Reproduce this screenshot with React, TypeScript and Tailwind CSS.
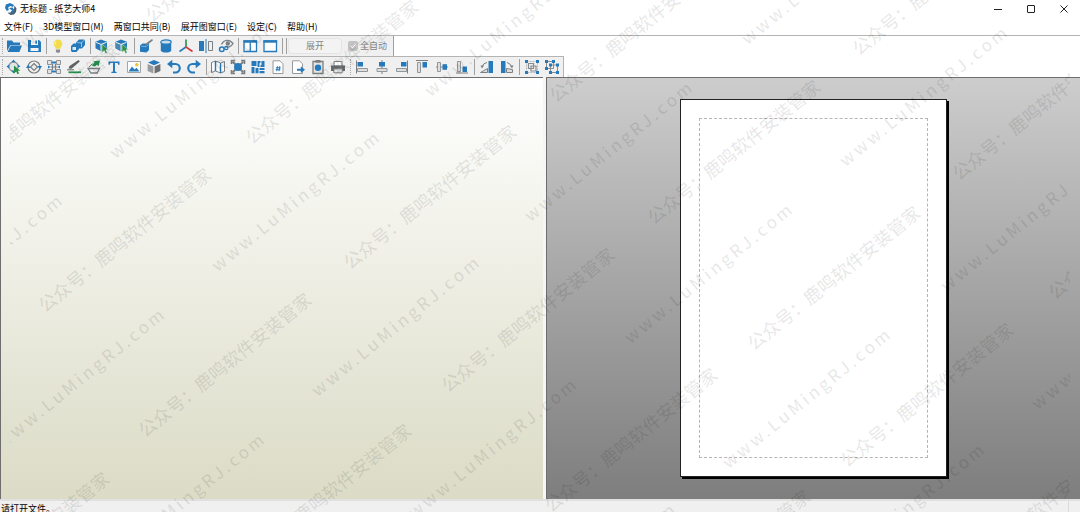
import React from 'react';

const BLUE = '#267abb';
const GRAY = '#7b7f82';
const GREEN = '#25914a';

const menus = ['文件(F)', '3D模型窗口(M)', '两窗口共同(B)', '展开图窗口(E)', '设定(C)', '帮助(H)'];

// Baseline start of every repeated mark, on the window's canvas
const accountMarks = [
  [-46, 183], [46, 307], [146, 432], [-56, 611], [153, 17], [253, 139], [351, 264], [449, 387],
  [552, 507], [246, 563], [557, 97], [655, 219], [755, 345], [848, 462], [645, 629], [860, 50],
  [960, 175], [1056, 294], [951, 584],
];
const siteMarks = [
  [28, 44], [117, 154], [219, 267], [319, 392], [4, 444], [-98, 330], [104, 569], [432, 92],
  [532, 217], [632, 339], [730, 464], [749, 40], [847, 162], [948, 287], [1039, 405], [824, 579],
  [416, 514], [515, 639],
];

const icons: Record<string, React.ReactNode> = {
  open: (
    <>
      <path d="M1 13V2.5h5l1.5 2H14V7H4.5z" fill={BLUE} />
      <path d="M4.8 7.6H16L13.4 14H1.6z" fill={BLUE} />
    </>
  ),
  save: (
    <>
      <path d="M2 2h11l2 2v10H2z" fill={BLUE} />
      <path d="M5 2h7v5H5z" fill="#f4f4f4" />
      <path d="M9.3 2.6h1.7v3.2H9.3z" fill={BLUE} />
      <path d="M4.5 10h8v3h-8z" fill="#f4f4f4" />
    </>
  ),
  bulb: (
    <>
      <path d="M8 1.5a4.3 4.3 0 0 0-4.3 4.3c0 2 1.6 2.9 2 4.9h4.6c.4-2 2-2.9 2-4.9A4.3 4.3 0 0 0 8 1.5z" fill="#f2dc4e" />
      <path d="M6 3.8a3 3 0 0 0-.8 2.6" stroke="#fff6b5" fill="none" />
      <path d="M5.9 11.4h4.2v2.4l-1 1H6.9l-1-1z" fill="#8d8d8d" />
    </>
  ),
  cubes: (
    <>
      <path d="m6 4.5 3-3h5l1 1V7l-3 3.5H6z" fill={BLUE} />
      <path d="M7 4.8h4.5V9M11.500 4.800l2.500-2.500" stroke="#cfe2f1" strokeWidth=".7" fill="none" />
      <path d="m1 8 2.500-2.500H9V11l-2.500 3H2l-1-1z" fill={BLUE} />
      <path d="M2.500 9h3.500v3H2.500z" fill="#dbe8f2" />
    </>
  ),
  cubePick: (
    <>
      <path d="m7 1.5 6 2.2v6.6l-6 3-5.5-3V3.7z" fill={BLUE} />
      <path d="m2 4.4 5 2 5.5-2M7 6.4v6.4" stroke="#f0f0f0" fill="none" />
      <path d="m8 6 6.5 5.8h-2.6l1.3 2.9-1.7.7-1.3-2.9L8 14.4z" fill={GREEN} stroke="#f0f0f0" strokeWidth=".5" />
    </>
  ),
  facePick: (
    <>
      <path d="m7 1.5 6 2.2v6.6l-6 3-5.5-3V3.7z" fill={BLUE} />
      <path d="m1.5 4.6 5 2V13l-5-2.7z" fill="#4c87b3" />
      <path d="m2 4.4 5 2 5.5-2M7 6.4v6.4" stroke="#f0f0f0" fill="none" />
      <path d="m8 6 6.5 5.8h-2.6l1.3 2.9-1.7.7-1.3-2.9L8 14.4z" fill={GREEN} stroke="#f0f0f0" strokeWidth=".5" />
    </>
  ),
  brush: (
    <>
      <path d="M2 7.500 4.500 5.500H11V12l-2.500 2.500L2 13.800z" fill={BLUE} />
      <path d="m2.800 8.200 5.400.5 2-2" stroke="#8ebbdd" strokeWidth=".8" fill="none" />
      <path d="m7 7.700 1.500-2.600L14 1l1 1.200-4.700 4.100z" fill={GRAY} />
    </>
  ),
  cylinder: (
    <>
      <path d="M2.8 4v8.2c0 3.2 10.4 3.2 10.4 0V4z" fill={BLUE} />
      <ellipse cx="8" cy="4" rx="5.2" ry="2.2" fill="#c9dcea" stroke={BLUE} strokeWidth="1.2" />
    </>
  ),
  axes: (
    <>
      <path d="M8 9V1.5" stroke={GREEN} strokeWidth="1.6" />
      <path d="m8 9-6.500 4.500" stroke={BLUE} strokeWidth="1.6" />
      <path d="m8 9 6.500 4.500" stroke="#d53a37" strokeWidth="1.6" />
    </>
  ),
  mirror: (
    <>
      <path d="M1 3h5v10H1z" fill={BLUE} />
      <path d="M8 1v14" stroke={BLUE} />
      <path d="M10.5 3.5h4v9h-4z" stroke={GRAY} fill="none" />
    </>
  ),
  inspect: (
    <>
      <path d="M3.5 6.5C6 1.5 11.5 1 15 5.5c-2 3.6-5.5 4.5-8 3" stroke={GRAY} strokeWidth="1.3" fill="none" />
      <circle cx="9.8" cy="5.5" r="2.2" fill={GRAY} />
      <circle cx="3.8" cy="11.3" r="2.3" stroke={BLUE} strokeWidth="1.5" fill="none" />
      <circle cx="8.3" cy="10" r="1.6" stroke={BLUE} strokeWidth="1.2" fill="none" />
    </>
  ),
  twoPane: (
    <>
      <path d="M2 3h12.5v10.5H2zM8.25 3v10.5" stroke={BLUE} strokeWidth="1.3" fill="#fff" />
      <path d="M1.4 2.3h13.7v2.4H1.4z" fill={BLUE} />
    </>
  ),
  onePane: (
    <>
      <path d="M2 3h12.5v10.5H2z" stroke={BLUE} strokeWidth="1.3" fill="#fff" />
      <path d="M1.4 2.3h13.7v2.4H1.4z" fill={BLUE} />
    </>
  ),
  move: (
    <>
      <circle cx="7.5" cy="7.5" r="4.5" stroke="#8a8e91" strokeWidth="1.3" fill="#e4e4e4" />
      <path d="m7.5.5 2 2.5h-4zM.5 7.5 3 5.5v4zM7.5 14.5l-2-2.5h4zM14.5 7.5 12 5.5v3z" fill={BLUE} />
      <path d="m8 6.5 6.3 5.2h-2.5l1.3 2.8-1.6.7-1.3-2.8L8 14.5z" fill={GREEN} />
    </>
  ),
  rotate: (
    <>
      <path d="m8 4.5 3.5 3.5L8 11.5 4.5 8z" stroke={GRAY} strokeWidth="1.2" fill="#ececec" />
      <circle cx="8" cy="8" r="6" stroke={GRAY} strokeWidth="1.2" fill="none" />
      <path d="m16 7-2.200 3.500L11.500 7zM0 9h4.500L2.200 5.500z" fill={BLUE} />
    </>
  ),
  join: (
    <>
      <path d="M1.500 1.500h4v4h-4zM10.500 1.500h4v4h-4zM1.500 10.500h4v4h-4zM10.500 10.500h4v4h-4z" fill="#e4e4e4" stroke="#8f9396" />
      <path d="M4.500 8h7M6.500 5v6M9.500 5v6" stroke={GRAY} strokeWidth="1.2" />
      <path d="M6 2.500h4v2H6zM2 6.500l2.500 1.500L2 9.500zM14 6.500 11.500 8 14 9.500zM6 11.500h4v2H6z" fill={BLUE} />
    </>
  ),
  lineTool: (
    <>
      <path d="m2.5 9.500 1-2.500 9-6 1.300 1.500-8.300 7.300z" fill="#5f6366" />
      <path d="M1 10.800h7" stroke={GRAY} strokeWidth="1.2" />
      <path d="M2.500 13.300H15" stroke={GREEN} strokeWidth="1.8" />
    </>
  ),
  flap: (
    <>
      <path d="M2 9.500h11.500L11 14H5z" stroke={GRAY} strokeWidth="1.3" fill="#f1f1f1" />
      <path d="m5.500 6.500 3-3-1.200-1.200 6.700-.8-1.500 5.700L11 5.700 9 7.500z" fill={GREEN} />
      <path d="m3 8 3.500-3.500" stroke={GRAY} />
    </>
  ),
  picture: (
    <>
      <path d="M1.5 2.5h13v11h-13z" stroke="#a3a6a8" fill="#fff" />
      <path d="m2.5 12.5 3.5-5 2.5 3 2-1.8 3 3.8z" fill={BLUE} />
      <circle cx="10.8" cy="5.7" r="1.8" fill="#e9c72f" />
    </>
  ),
  box: (
    <>
      <path d="m8 1 6 2.6L8 6.3 2 3.6z" fill={BLUE} />
      <path d="m1.6 5 5.8 2.6v7L1.6 12z" fill="#9a9da0" />
      <path d="m14.4 5-5.8 2.6v7l5.8-2.6z" fill="#6a6f73" />
    </>
  ),
  undo: (
    <>
      <path d="M4 5h5.5a4 4 0 0 1 0 8.5H7" stroke={BLUE} strokeWidth="2.2" fill="none" />
      <path d="M6.3.7v8.6L1 5z" fill={BLUE} />
    </>
  ),
  redo: (
    <>
      <path d="M12 5H6.5a4 4 0 0 0 0 8.5H9" stroke={BLUE} strokeWidth="2.2" fill="none" />
      <path d="M9.7.7v8.6L15 5z" fill={BLUE} />
    </>
  ),
  unfold: (
    <>
      <path d="m1.5 3.5 4-1.5 5 2 4-1.5v10l-4 1.5-5-2-4 1.5z" stroke={GRAY} fill="#fbfbfb" />
      <path d="M5.5 2v10M10.5 4v10" stroke={BLUE} strokeWidth="1.4" />
    </>
  ),
  fit: (
    <>
      <path d="M1.5 5V1.5H5M11 1.5h3.5V5M14.5 11v3.5H11M5 14.5H1.5V11" stroke={GRAY} strokeWidth="1.6" fill="none" />
      <path d="m2.5 2.5 3 3M13.5 2.5l-3 3M13.5 13.5l-3-3M2.5 13.5l3-3" stroke={GRAY} strokeWidth="1.8" />
      <circle cx="8" cy="8" r="4" fill={BLUE} />
    </>
  ),
  arrange: (
    <path d="M1.5 2h5v5h-5zM7.5 2h3v2h-1v4h-2zM11.5 2h3v6h-4V6h1zM1.5 8h3v6.3h-3zM5.5 9h3v5.3h-3zM9.5 9h5v2h-5zM9.5 12h5v2.3h-5z" fill={BLUE} />
  ),
  pageNumber: (
    <>
      <path d="M3 1.8h7l3 3v9.7H3z" fill="#fff" stroke="#969a9d" />
      <path d="m7.5 7.2-.8 5M9.8 7.2l-.8 5M6 8.8h4.7M5.7 10.7h4.7" stroke={BLUE} />
    </>
  ),
  pageNext: (
    <>
      <path d="M2.5 1.8h7l3 3v9.7h-10z" fill="#fff" stroke="#969a9d" />
      <path d="M7 9.7h3.8V7.3l4.2 3.4-4.2 3.4v-2.4H7z" fill={BLUE} />
    </>
  ),
  clipboard: (
    <>
      <path d="M3 2.5h10v12H3z" fill="#e4e4e4" stroke={GRAY} strokeWidth="1.3" />
      <path d="M5.5 1h5v2.7h-5z" fill={GRAY} />
      <circle cx="8" cy="8.8" r="3.2" fill={BLUE} />
    </>
  ),
  print: (
    <>
      <path d="M4 2.5h8V7H4z" fill="#fff" stroke={GRAY} />
      <path d="M1 6.5h14V12H1z" fill="#686c6f" />
      <path d="M3.8 9.8h8.4v4H3.8z" fill="#e4e4e4" stroke={GRAY} />
    </>
  ),
  alignLeft: (
    <>
      <path d="M2.5 1.5v13" stroke={GRAY} />
      <path d="M3.5 3H9v4.5H3.5z" fill={BLUE} />
      <path d="M3.5 9.5h10v3h-10z" fill="#dedede" stroke="#92979a" />
    </>
  ),
  alignCenter: (
    <>
      <path d="M8 1v14" stroke={GRAY} />
      <path d="M5 3h6v4.5H5z" fill={BLUE} />
      <path d="M3 9.5h10v3H3z" fill="#dedede" stroke="#92979a" />
    </>
  ),
  alignRight: (
    <>
      <path d="M13.5 1.5v13" stroke={GRAY} />
      <path d="M7 3h5.5v4.5H7z" fill={BLUE} />
      <path d="M2.5 9.5h10v3h-10z" fill="#dedede" stroke="#92979a" />
    </>
  ),
  alignTop: (
    <>
      <path d="M2 1.5h12" stroke={GRAY} />
      <path d="M8.5 3H13v5.5H8.5z" fill={BLUE} />
      <path d="M3.5 3.5h3v10h-3z" fill="#dedede" stroke="#92979a" />
    </>
  ),
  alignMiddle: (
    <>
      <path d="M2 8h12" stroke={GRAY} />
      <path d="M8.5 5.2H13v5.6H8.5z" fill={BLUE} />
      <path d="M3.5 3.5h3v9h-3z" fill="#dedede" stroke="#92979a" />
    </>
  ),
  alignBottom: (
    <>
      <path d="M2 14h12" stroke={GRAY} />
      <path d="M8.5 7.5H13V13H8.5z" fill={BLUE} />
      <path d="M3.5 2.5h3v10h-3z" fill="#dedede" stroke="#92979a" />
    </>
  ),
  turnLeft: (
    <>
      <path d="M9.5 2H14v12H9.5z" fill={BLUE} />
      <path d="M8.5 9.5v4h-7z" fill="#dedede" stroke={GRAY} />
      <path d="M8 3.5A6 6 0 0 0 3 8" stroke={GRAY} fill="none" />
      <path d="M1.5 6.5H5l-2 3z" fill={GRAY} />
    </>
  ),
  turnRight: (
    <>
      <path d="M2 2h4.5v12H2z" fill={BLUE} />
      <path d="M7.5 9.5v4h6v-3z" fill="#dedede" stroke={GRAY} />
      <path d="M8 3.5A6 6 0 0 1 12.5 8" stroke={GRAY} fill="none" />
      <path d="M14.5 6.5H11l2 3z" fill={GRAY} />
    </>
  ),
  group: (
    <>
      <path d="M2.5 2.5h11v11h-11z" stroke="#b7b7b7" fill="none" strokeDasharray="2 1" />
      <path d="M4.5 4.5h5v5h-5zM7 7h5v5H7z" stroke="#888c8f" strokeWidth="1.2" fill="none" />
      <path d="M1 1h3v3H1zM12 1h3v3h-3zM1 12h3v3H1zM12 12h3v3h-3z" fill={BLUE} />
    </>
  ),
  ungroup: (
    <>
      <path d="M2.5 2.5h7v7h-7zM6.5 6h7v7.5h-7z" stroke="#888c8f" fill="none" />
      <path d="M1 1h3v3H1zM8 1h3v3H8zM1 8h3v3H1zM5 4.5h3v3H5zM12 4.5h3v3h-3zM5 12h3v3H5zM12 12h3v3h-3z" fill={BLUE} />
    </>
  ),
  text: <path d="M2.5 2.5h11v3.2h-1.3l-.6-1.6H9v8.3l1.6.5v1H5.4v-1l1.6-.5V4.1H4.4l-.6 1.6H2.5z" fill={BLUE} />,
};

const Tool = ({ name }: { name: string }) => (
  <button type="button" aria-label={name} className="flex w-5 shrink-0 items-center justify-center">
    <svg viewBox="0 0 16 16" className="size-4">
      {icons[name]}
    </svg>
  </button>
);

const Tools = ({ names }: { names: string[] }) => (
  <div className="flex">
    {names.map((name) => (
      <Tool key={name} name={name} />
    ))}
  </div>
);

const Divider = ({ wide }: { wide?: boolean }) => (
  <div className={`flex shrink-0 justify-center py-0.5 ${wide ? 'w-[5px]' : 'w-1'}`}>
    <div className="w-px bg-[#a0a0a0]" />
  </div>
);

const Grip = () => (
  <div className="flex w-1 shrink-0 justify-center py-0.5">
    <div className="border-l border-dotted border-[#a8a8a8]" />
  </div>
);

const Watermark = () => (
  <div aria-hidden="true" className="pointer-events-none absolute inset-0 overflow-hidden px-2.5">
    <div className="relative h-full overflow-hidden leading-5 font-medium whitespace-nowrap text-black/9">
      {accountMarks.map(([x, y]) => (
        <span
          key={`a${x}`}
          className="absolute origin-left -translate-x-4 -translate-y-1/2 -rotate-39 text-[18px]"
          style={{ left: x, top: y }}
        >
          公众号：鹿鸣软件安装管家
        </span>
      ))}
      {siteMarks.map(([x, y]) => (
        <span
          key={`s${x}`}
          className="absolute origin-left -translate-x-4 -translate-y-1/2 -rotate-39 text-[17px] tracking-[3px]"
          style={{ left: x, top: y }}
        >
          www.LuMingRJ.com
        </span>
      ))}
    </div>
  </div>
);

export default function App() {
  return (
    <div
      lang="zh-CN"
      className="relative flex h-screen flex-col overflow-hidden bg-white font-['Noto_Sans_CJK_SC',sans-serif] text-[9px] leading-4 text-black"
    >
      {/* Title bar */}
      <header className="flex h-[18px] shrink-0 items-center justify-between pl-[5px]">
        <div className="flex items-center gap-[3px]">
          <svg viewBox="0 0 12 12" className="size-3">
            <path d="M5 0 .8 1.6 0 5l1.8 3 2-1-.6-2.5 2-1.5L8 4l1-2z" fill={BLUE} />
            <path d="m9.5 2.5 2 3L11 9l-2 2.5-3.5.5-3-2.2 3-.3 2.500-1L9 6z" fill="#4c5f70" />
            <path d="m4 5 3.5-.5L9.300 7 8 9.800l-3-.3 2-2z" fill={BLUE} />
          </svg>
          <h1>无标题 - 纸艺大师4</h1>
        </div>
        <div className="flex h-full">
          <button type="button" aria-label="最小化" className="flex w-[33px] items-center justify-center">
            <svg viewBox="0 0 8 8" className="size-2"><path d="M0 4.5h8" stroke="#222" /></svg>
          </button>
          <button type="button" aria-label="最大化" className="flex w-[33px] items-center justify-center">
            <svg viewBox="0 0 8 8" className="size-2"><rect x=".5" y=".5" width="7" height="7" rx=".5" stroke="#222" fill="none" /></svg>
          </button>
          <button type="button" aria-label="关闭" className="flex w-[33px] items-center justify-center">
            <svg viewBox="0 0 8 8" className="size-2"><path d="m.5.5 7 7m0-7-7 7" stroke="#222" /></svg>
          </button>
        </div>
      </header>

      {/* Menu bar */}
      <nav className="flex h-[18px] shrink-0 items-center gap-2.5 border-b border-[#b4b4b4] pl-1">
        {menus.map((menu) => (
          <button key={menu} type="button" className="whitespace-nowrap">
            {menu}
          </button>
        ))}
      </nav>

      {/* Toolbars */}
      <div className="flex shrink-0 flex-col items-start">
        <div className="flex h-5 border-r border-[#a0a0a0] bg-[#f0f0f0] pr-1.5">
          <Grip />
          <Tools names={['open', 'save']} />
          <Divider />
          <Tools names={['bulb', 'cubes']} />
          <Divider />
          <Tools names={['cubePick', 'facePick']} />
          <Divider />
          <Tools names={['brush', 'cylinder', 'axes', 'mirror', 'inspect']} />
          <Divider />
          <Tools names={['twoPane', 'onePane']} />
          <Divider />
          <Divider />
          <div className="flex items-center gap-1.5">
            <button type="button" disabled className="h-4 w-[54px] rounded-sm border border-[#e4e4e4] bg-[#f3f3f3] leading-3 text-[#858585]">
              展开
            </button>
            <label className="flex items-center gap-0.5 text-[#858585]">
              <span className="grid size-2.5">
                <input type="checkbox" defaultChecked disabled className="col-start-1 row-start-1 size-2.5 appearance-none rounded-xs bg-[#c2c2c2]" />
                <svg viewBox="0 0 10 10" className="col-start-1 row-start-1 size-2.5">
                  <path d="m2.5 5 1.8 1.8 3.2-3.5" stroke="#fff" fill="none" />
                </svg>
              </span>
              全自动
            </label>
          </div>
        </div>
        <div className="flex h-[21px] border-t border-r border-[#b4b4b4] bg-[#f0f0f0] pr-px">
          <Grip />
          <Tools names={['move', 'rotate', 'join', 'lineTool', 'flap', 'text', 'picture', 'box', 'undo', 'redo']} />
          <Divider />
          <Tools names={['unfold', 'fit', 'arrange', 'pageNumber', 'pageNext', 'clipboard', 'print']} />
          <Grip />
          <Tools names={['alignLeft', 'alignCenter', 'alignRight', 'alignTop', 'alignMiddle', 'alignBottom']} />
          <Divider wide />
          <Tools names={['turnLeft', 'turnRight']} />
          <Divider wide />
          <Tools names={['group', 'ungroup']} />
        </div>
      </div>

      {/* 3D view and pattern view */}
      <main className="grid min-h-0 flex-1 grid-cols-[543fr_534fr] gap-[3px] bg-[#f6f6f6]">
        <section className="border-t border-l border-[#6e6e6e] bg-linear-to-b from-white to-[#dbdbc6]" />
        <section className="flex min-h-0 justify-center border-t border-l border-[#6e6e6e] bg-linear-to-b from-[#cdcdcd] to-[#7e7e7e] pt-[21px] pb-[22px]">
          <div className="aspect-[267/378] h-full border border-[#222222] bg-white p-[18px] shadow-[2px_2px_0_#000]">
            <div className="h-full border border-dashed border-[#b5b5b5]" />
          </div>
        </section>
      </main>

      {/* Status bar */}
      <footer className="flex h-[13px] shrink-0 border-t-2 border-[#e0e0e0] bg-[#f0f0f0]">
        <p className="grow pl-px">请打开文件。</p>
        <div className="w-3 border-l border-[#dcdcdc]" />
      </footer>

      <Watermark />
    </div>
  );
}
